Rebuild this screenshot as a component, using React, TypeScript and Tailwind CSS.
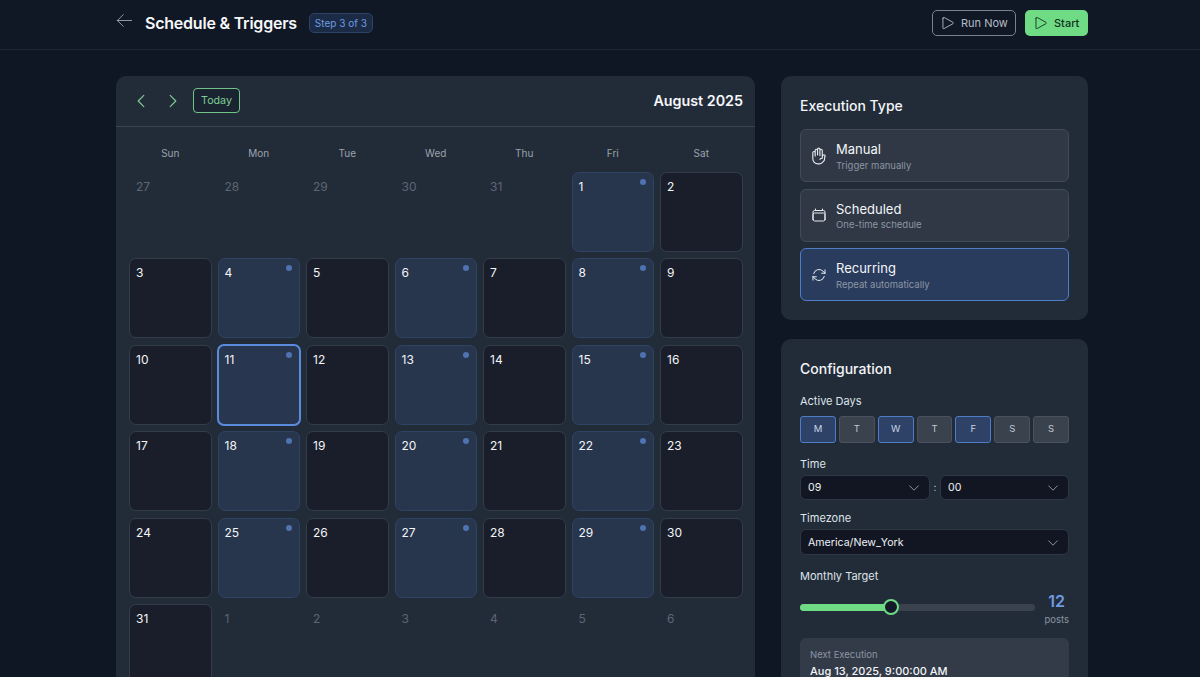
import {
  HiOutlineArrowLeft,
  HiOutlineArrowPath,
  HiOutlineCalendar,
  HiOutlineChevronDown,
  HiOutlineChevronLeft,
  HiOutlineChevronRight,
  HiOutlineHandRaised,
  HiOutlinePlay,
} from "react-icons/hi2";

const weekdays = ["Sun", "Mon", "Tue", "Wed", "Thu", "Fri", "Sat"];

const activeDates = [1, 4, 6, 8, 11, 13, 15, 18, 20, 22, 25, 27, 29];

const cells = [
  ...[27, 28, 29, 30, 31].map((day) => ({ day, inMonth: false })),
  ...Array.from({ length: 31 }, (_, i) => ({ day: i + 1, inMonth: true })),
  ...[1, 2, 3, 4, 5, 6].map((day) => ({ day, inMonth: false })),
];

const executionTypes = [
  { title: "Manual", sub: "Trigger manually", icon: HiOutlineHandRaised, iconClass: "h-[18px] w-[18px]", active: false },
  { title: "Scheduled", sub: "One-time schedule", icon: HiOutlineCalendar, iconClass: "h-[16px] w-[16px]", active: false },
  { title: "Recurring", sub: "Repeat automatically", icon: HiOutlineArrowPath, iconClass: "h-[16px] w-[16px]", active: true },
];

const days = [
  { label: "M", on: true },
  { label: "T", on: false },
  { label: "W", on: true },
  { label: "T", on: false },
  { label: "F", on: true },
  { label: "S", on: false },
  { label: "S", on: false },
];

function DayCell({ day, inMonth }: { day: number; inMonth: boolean }) {
  if (!inMonth) {
    return <div className="h-[80px] px-[7px] pt-[8px] text-[12px] leading-[14px] text-[#5c6673]">{day}</div>;
  }
  const today = day === 11;
  const scheduled = activeDates.includes(day);
  return (
    <div
      className={`relative h-[80px] rounded-[7px] px-[6px] pt-[7px] text-[12px] leading-[14px] text-[#f3f5f8] ${
        today
          ? "-m-px h-[82px] border-2 border-[#5a8bdc] bg-[#28364f]"
          : scheduled
            ? "border border-[#2f4363] bg-[#27354d]"
            : "border border-[#343c49] bg-[#191e2a]"
      }`}
    >
      {day}
      {scheduled && <span className="absolute top-[6px] right-[7px] h-[6px] w-[6px] rounded-full bg-[#4e73b0]" />}
    </div>
  );
}

function Select({ value, className }: { value: string; className: string }) {
  return (
    <div className={`flex items-center justify-between rounded-[6px] border border-[#2f3744] bg-[#111622] pt-[1px] pr-[8px] pl-[7px] text-[10.6px] text-[#eef1f5] ${className}`}>
      {value}
      <HiOutlineChevronDown className="h-[14px] w-[14px] text-[#9aa3af]" />
    </div>
  );
}

export default function App() {
  return (
    <div className="h-[677px] overflow-hidden bg-[#0f1624] font-['Inter',sans-serif] text-white">
      <header className="flex h-[50px] items-start justify-between border-b border-[#202835] bg-[#101725] pt-[10px] pr-[112px] pl-[116px]">
        <div className="flex items-start">
          <HiOutlineArrowLeft className="mt-[0.5px] ml-[-1.5px] h-[19px] w-[19px] text-[#b4bac3]" strokeWidth={1} />
          <h1 className="ml-[11.5px] text-[16px] leading-[27px] font-semibold tracking-[-0.22px] text-[#f6f7f9]">Schedule &amp; Triggers</h1>
          <span className="mt-[3px] ml-[12px] flex h-[20px] w-[64px] items-center justify-center rounded-[5px] border border-[#2c4266] bg-[#1b2a45] text-[10px] text-[#6f9be0]">Step 3 of 3</span>
        </div>
        <div className="flex gap-[9px]">
          <button className="flex h-[26px] w-[84px] items-center gap-[4px] rounded-[5px] border border-[#7b828d] pl-[6px] text-[11px] text-[#b5bcc6]">
            <HiOutlinePlay className="h-[18px] w-[18px]" strokeWidth={1.2} />
            Run Now
          </button>
          <button className="flex h-[26px] w-[63px] items-center gap-[4px] rounded-[5px] bg-[#6fdc85] pl-[7px] text-[11px] font-medium text-[#12301f]">
            <HiOutlinePlay className="h-[18px] w-[18px]" strokeWidth={1.2} />
            Start
          </button>
        </div>
      </header>

      <main className="flex items-start gap-[26px] pt-[26px] pr-[112px] pl-[116px]">
        <section className="w-[639px] shrink-0 rounded-t-[10px] bg-[#222c39]">
          <div className="flex h-[51px] items-center justify-between border-b border-[#3a4350] pr-[12px] pb-[1px] pl-[16px]">
            <div className="flex items-center">
              <HiOutlineChevronLeft className="h-[18px] w-[18px] text-[#7fce95]" />
              <HiOutlineChevronRight className="ml-[14px] h-[18px] w-[18px] text-[#7fce95]" />
              <button className="ml-[11px] flex h-[25px] w-[47px] items-center justify-center rounded-[4px] border border-[#6fc486] bg-[#1a2430] pt-[1.5px] text-[10.7px] text-[#7fce95]">Today</button>
            </div>
            <h2 className="text-[14.3px] font-semibold text-[#f6f7f9]">August 2025</h2>
          </div>
          <div className="pt-[20px] pr-[12.5px] pl-[13px]">
            <div className="grid grid-cols-7 gap-x-[6px]">
              {weekdays.map((d) => (
                <div key={d} className="h-[25px] text-center text-[10px] leading-[12px] text-[#9aa2ad]">{d}</div>
              ))}
            </div>
            <div className="grid grid-cols-7 gap-x-[6px] gap-y-[6.4px]">
              {cells.map((c, i) => (
                <DayCell key={i} day={c.day} inMonth={c.inMonth} />
              ))}
            </div>
          </div>
        </section>

        <aside className="flex w-[307px] shrink-0 flex-col gap-[19px]">
          <section className="h-[244px] rounded-[10px] bg-[#222c39] px-[19px] pt-[20px]">
            <h3 className="text-[14px] leading-[20px] font-medium text-[#f3f5f8]">Execution Type</h3>
            <div className="mt-[13px] flex flex-col gap-[6.5px]">
              {executionTypes.map((t) => (
                <div
                  key={t.title}
                  className={`flex h-[53px] items-center rounded-[6px] border pl-[9px] ${
                    t.active ? "border-[#4f7cc6] bg-[#2a3c5e]" : "border-[#424a57] bg-[#303845]"
                  }`}
                >
                  <span className="flex w-[18px] justify-center">
                    <t.icon className={`${t.iconClass} text-[#e8ebef]`} />
                  </span>
                  <div className="ml-[8px] pt-[2px]">
                    <div className="text-[13px] leading-[16px] text-[#f3f5f8]">{t.title}</div>
                    <div className="mt-[1.5px] text-[9.5px] leading-[13px] text-[#8c95a2]">{t.sub}</div>
                  </div>
                </div>
              ))}
            </div>
          </section>

          <section className="rounded-[10px] bg-[#222c39] px-[19px] pt-[20px] pb-[20px]">
            <h3 className="text-[14px] leading-[20px] font-medium text-[#f3f5f8]">Configuration</h3>
            <div className="mt-[16px] text-[11px] leading-[12px] text-[#dfe3e8]">Active Days</div>
            <div className="mt-[9px] grid h-[27px] grid-cols-7 gap-[3px]">
              {days.map((d, i) => (
                <div
                  key={i}
                  className={`flex items-center justify-center rounded-[3px] border text-[9.5px] ${
                    d.on ? "border-[#4f7cc6] bg-[#2e4268] text-[#c9d4e6]" : "border-[#4a525e] bg-[#3a424e] text-[#c3c9d1]"
                  }`}
                >
                  {d.label}
                </div>
              ))}
            </div>
            <div className="mt-[15px] text-[11px] leading-[12px] text-[#dfe3e8]">Time</div>
            <div className="mt-[5px] flex items-center">
              <Select value="09" className="h-[25px] w-[130px]" />
              <span className="w-[10px] text-center text-[10px] text-[#c3c9d1]">:</span>
              <Select value="00" className="h-[25px] flex-1" />
            </div>
            <div className="mt-[12px] text-[11px] leading-[12px] text-[#dfe3e8]">Timezone</div>
            <Select value="America/New_York" className="mt-[5px] h-[26px]" />
            <div className="mt-[15px] text-[11px] leading-[12px] text-[#dfe3e8]">Monthly Target</div>
            <div className="mt-[9px] flex items-center justify-between">
              <div className="relative mb-[2px] h-[7px] w-[235px] rounded-full bg-[#3a424e]">
                <div className="h-full w-[91px] rounded-full bg-[#6fdc85]" />
                <span className="absolute top-[-4.5px] left-[83px] h-[16px] w-[16px] rounded-full border-2 border-[#6fdc85] bg-[#141b28]" />
              </div>
              <div className="text-center">
                <div className="text-[16px] leading-[20px] font-semibold text-[#6f9be0]">12</div>
                <div className="mt-[1.5px] text-[9.5px] leading-[13px] text-[#8c95a2]">posts</div>
              </div>
            </div>
            <div className="mt-[12.5px] h-[70px] rounded-[6px] bg-[#333b49] px-[10px] pt-[11px]">
              <div className="text-[9.5px] leading-[12px] text-[#8c95a2]">Next Execution</div>
              <div className="mt-[2px] text-[11px] leading-[16px] font-medium text-[#f3f5f8]">Aug 13, 2025, 9:00:00 AM</div>
            </div>
          </section>
        </aside>
      </main>
    </div>
  );
}
